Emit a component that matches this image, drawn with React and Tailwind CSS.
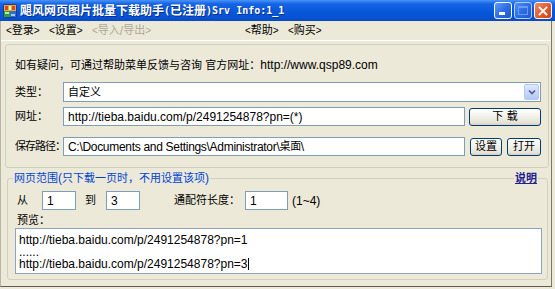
import React from "react";

const CJK = /([\u2E80-\u9FFF\uFF00-\uFFEF\u3000-\u303F]+)/;

function T({ s }) {
  const parts = s.split(CJK).filter(Boolean);
  return (
    <>
      {parts.map((p, i) =>
        CJK.test(p) ? (
          <span key={i} className="text-[11px] leading-none">{p}</span>
        ) : (
          <span key={i} className="text-[12px] leading-none whitespace-pre">{p}</span>
        )
      )}
    </>
  );
}

function TitleText({ s }) {
  const parts = s.split(CJK).filter(Boolean);
  return (
    <>
      {parts.map((p, i) =>
        CJK.test(p) ? (
          <span key={i} className="text-[12px] leading-none">{p}</span>
        ) : (
          <span key={i} className="font-['DejaVu_Sans_Mono'] text-[10px] leading-none whitespace-pre">{p}</span>
        )
      )}
    </>
  );
}

function MenuItem({ label, w, disabled }) {
  return (
    <div className={`${w} flex items-center ${disabled ? "text-[#aca899]" : "text-black"}`}>
      <span className="text-[10px] leading-none">&lt;</span>
      <T s={label} />
      <span className="text-[10px] leading-none">&gt;</span>
    </div>
  );
}

function Input({ w, text, h = "h-[19px]", tight }) {
  return (
    <div className={`${w} ${h} bg-white border border-[#7f9db9] flex items-center pl-[4px] overflow-hidden whitespace-nowrap ${tight ? "tracking-[-0.3px]" : ""}`}>
      <T s={text} />
    </div>
  );
}

function Btn({ w, children }) {
  return (
    <div
      className={`${w} h-[18px] rounded-[3px] border border-[#003c74] bg-[linear-gradient(to_bottom,#ffffff_0%,#f4f3ee_40%,#e6e3d6_85%,#d6d0c0_100%)] flex items-center justify-center`}
    >
      {children}
    </div>
  );
}

function AppIcon() {
  return (
    <svg width="14" height="14" viewBox="0 0 14 14">
      <rect x="0.5" y="0.5" width="13" height="13" rx="1" fill="#3f7fd8" stroke="#1d3f8a" />
      <rect x="1" y="1" width="12" height="6" fill="#f3a53a" />
      <rect x="2" y="2" width="3" height="4" fill="#d74a1f" />
      <rect x="6" y="2" width="2" height="4" fill="#fff3c0" />
      <rect x="9" y="2" width="3" height="4" fill="#d74a1f" />
      <rect x="1" y="7" width="6" height="6" fill="#2f9e44" />
      <rect x="7" y="7" width="6" height="6" fill="#2f6fd0" />
      <rect x="2" y="8" width="4" height="2" fill="#b7f0a0" />
      <rect x="8" y="10" width="4" height="2" fill="#a8c8ff" />
    </svg>
  );
}

export default function App() {
  return (
    <div className="w-[555px] h-[289px] bg-[#ece9d8] overflow-hidden font-['Liberation_Sans','Noto_Sans_CJK_SC',sans-serif] text-black">
      {/* Title bar */}
      <div className="h-[21px] w-full flex items-center bg-[linear-gradient(to_bottom,#4a93f6_0%,#1565e6_18%,#0758da_55%,#0752d3_85%,#0a48c2_100%)]">
        <div className="ml-[3px] w-[14px] h-[14px] flex">
          <AppIcon />
        </div>
        <div className="ml-[3px] flex items-center text-white font-bold [text-shadow:1px_1px_0_#0a2f8a] whitespace-nowrap">
          <TitleText s="飓风网页图片批量下载助手(已注册)Srv Info:1_1" />
        </div>
        <div className="ml-auto mr-[3px] flex items-center gap-[2px]">
          <div className="w-[18px] h-[17px] rounded-[3px] border border-white bg-[linear-gradient(135deg,#5b9cf8_0%,#2a6ae6_55%,#1d58d6_100%)] flex items-end pl-[4px] pb-[3px]">
            <div className="w-[6px] h-[3px] bg-white" />
          </div>
          <div className="w-[18px] h-[17px] rounded-[3px] border border-[#b6cdf7] bg-[linear-gradient(135deg,#4f8ff2_0%,#2a6ae6_55%,#1d58d6_100%)] flex items-center justify-center">
            <div className="w-[10px] h-[9px] border border-[#6c9bef] border-t-[2px]" />
          </div>
          <div className="w-[18px] h-[17px] rounded-[3px] border border-white bg-[linear-gradient(135deg,#f08a62_0%,#e2582e_55%,#cc4418_100%)] flex items-center justify-center">
            <svg width="10" height="10" viewBox="0 0 10 10">
              <path d="M1.5 1.5 L8.5 8.5 M8.5 1.5 L1.5 8.5" stroke="#ffffff" strokeWidth="1.8" strokeLinecap="square" />
            </svg>
          </div>
        </div>
      </div>

      {/* Client */}
      <div className="w-[552px] h-[266px] border-l border-r border-b border-l-[#b8b5a6] border-r-[#7a786e] border-b-[#5f5d55] flex flex-col">
        {/* Menu */}
        <div className="h-[20px] border-b border-white flex items-center pl-[5px]">
          <MenuItem label="登录" w="w-[43px]" />
          <MenuItem label="设置" w="w-[43px]" />
          <MenuItem label="导入/导出" w="w-[153px]" disabled />
          <MenuItem label="帮助" w="w-[43px]" />
          <MenuItem label="购买" w="w-[43px]" />
        </div>

        {/* Upper panel */}
        <div className="mt-[3px] ml-[4px] w-[544px] h-[124px] border border-[#d0d0bf] rounded-[3px] flex flex-col pl-[9px]">
          <div className="mt-[13px] h-[14px] flex items-center whitespace-nowrap">
            <T s="如有疑问，可通过帮助菜单反馈与咨询 官方网址：http://www.qsp89.com" />
          </div>

          <div className="mt-[10px] h-[20px] flex items-center">
            <div className="w-[48px] flex items-center"><T s="类型：" /></div>
            <div className="w-[478px] h-[20px] bg-white border border-[#7f9db9] flex items-center pl-[4px]">
              <T s="自定义" />
              <div className="ml-auto mr-[1px] w-[15px] h-[16px] rounded-[2px] border border-[#b4c8f4] bg-[linear-gradient(to_bottom,#dfe8fe_0%,#c4d5fb_60%,#b3c8f8_100%)] flex items-center justify-center">
                <svg width="8" height="6" viewBox="0 0 8 6">
                  <path d="M1 1.5 L4 4.5 L7 1.5" stroke="#4d6185" strokeWidth="1.6" fill="none" />
                </svg>
              </div>
            </div>
          </div>

          <div className="mt-[5px] h-[19px] flex items-center">
            <div className="w-[48px] flex items-center"><T s="网址：" /></div>
            <Input w="w-[402px]" text="http://tieba.baidu.com/p/2491254878?pn=(*)" />
            <div className="ml-[4px] flex">
              <Btn w="w-[72px]"><T s="下 载" /></Btn>
            </div>
          </div>

          <div className="mt-[11px] h-[19px] flex items-center">
            <div className="w-[48px] flex items-center whitespace-nowrap tracking-[-1px]"><T s="保存路径：" /></div>
            <Input w="w-[402px]" text="C:\Documents and Settings\Administrator\桌面\" tight />
            <div className="ml-[5px] flex">
              <Btn w="w-[32px]"><T s="设置" /></Btn>
            </div>
            <div className="ml-[5px] flex">
              <Btn w="w-[34px]"><T s="打开" /></Btn>
            </div>
          </div>
        </div>

        {/* Lower group */}
        <div className="mt-[10px] ml-[6px] w-[541px] h-[102px] border border-[#d0d0bf] rounded-[3px] flex flex-col">
          <div className="-mt-[8px] h-[14px] flex items-center justify-between pl-[5px] pr-[9px]">
            <div className="bg-[#ece9d8] px-[1px] flex items-center text-[#0046d5] whitespace-nowrap">
              <T s="网页范围(只下载一页时，不用设置该项)" />
            </div>
            <div className="bg-[#ece9d8] px-[1px] flex items-center text-[#21218f] underline font-bold">
              <T s="说明" />
            </div>
          </div>

          <div className="mt-[6px] h-[19px] flex items-center pl-[9px]">
            <div className="w-[25px] flex items-center"><T s="从" /></div>
            <Input w="w-[34px]" text="1" />
            <div className="ml-[9px] w-[21px] flex items-center"><T s="到" /></div>
            <Input w="w-[34px]" text="3" />
            <div className="ml-[34px] w-[71px] flex items-center whitespace-nowrap"><T s="通配符长度：" /></div>
            <Input w="w-[43px]" text="1" />
            <div className="ml-[4px] flex items-center"><T s="(1~4)" /></div>
          </div>

          <div className="mt-[3px] h-[14px] flex items-center pl-[9px]">
            <T s="预览：" />
          </div>

          <div className="mt-[1px] ml-[7px] w-[527px] h-[46px] bg-white border border-[#8ea4bd] pl-[3px] pt-[5px] flex flex-col overflow-hidden">
            <div className="h-[12px] flex items-center overflow-hidden"><T s="http://tieba.baidu.com/p/2491254878?pn=1" /></div>
            <div className="h-[12px] flex items-center overflow-hidden"><T s="......" /></div>
            <div className="h-[12px] flex items-center">
              <T s="http://tieba.baidu.com/p/2491254878?pn=3" />
              <div className="w-[1px] h-[12px] bg-black" />
            </div>
          </div>
        </div>
      </div>
    </div>
  );
}
